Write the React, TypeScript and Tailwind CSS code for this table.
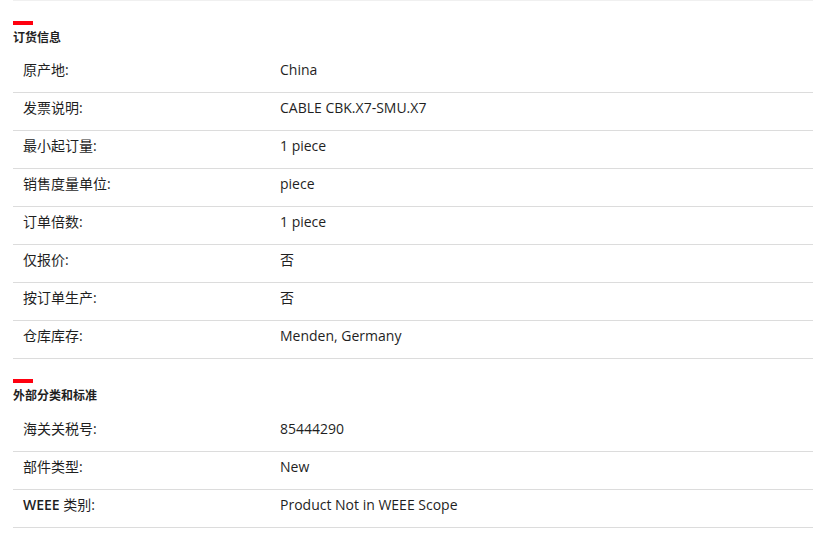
const sections = [
  {
    title: "订货信息",
    rows: [
      ["原产地:", "China"],
      ["发票说明:", "CABLE CBK.X7-SMU.X7"],
      ["最小起订量:", "1 piece"],
      ["销售度量单位:", "piece"],
      ["订单倍数:", "1 piece"],
      ["仅报价:", "否"],
      ["按订单生产:", "否"],
      ["仓库库存:", "Menden, Germany"],
    ],
  },
  {
    title: "外部分类和标准",
    rows: [
      ["海关关税号:", "85444290"],
      ["部件类型:", "New"],
      ["WEEE 类别:", "Product Not in WEEE Scope"],
    ],
  },
];

const font = { fontFamily: '"Open Sans", "Noto Sans CJK SC", sans-serif' };

export default function App() {
  return (
    <div className="min-h-[543px] bg-white px-[13px] text-[#1f1f1f]" style={font}>
      <div className="w-[800px] border-t border-[#f0f0f0]">
        {sections.map((section, i) => (
          <section key={section.title} className="pt-5">
            <div className="h-1 w-5 bg-[#ff000f]" />
            <h3
              className={
                i === 0
                  ? "mt-[4px] mb-2 text-[12px] font-bold leading-[18px]"
                  : "mt-[4px] mb-[9px] text-[12px] font-bold leading-[18px]"
              }
            >
              {section.title}
            </h3>
            {section.rows.map(([label, value]) => (
              <div
                key={label}
                className="box-border flex h-[38px] border-b border-[#dcdcdc] pt-[6px]"
              >
                <div className="w-[267px] pl-[10px] text-[14px] leading-[18px]">
                  {label.startsWith("WEEE") ? (
                    <>
                      <span className="font-semibold">WEEE</span>
                      {label.slice(4)}
                    </>
                  ) : (
                    label
                  )}
                </div>
                <div className="flex-1 text-[14px] leading-[18px]">{value}</div>
              </div>
            ))}
          </section>
        ))}
      </div>
    </div>
  );
}
